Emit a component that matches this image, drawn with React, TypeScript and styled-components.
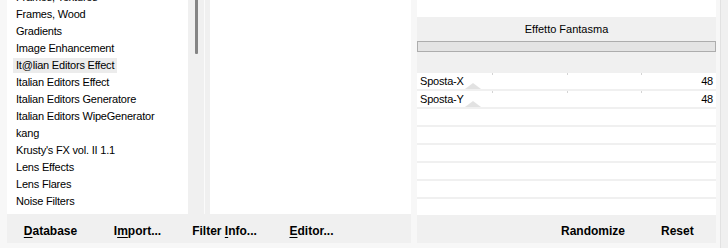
import React from 'react';
import styled, { createGlobalStyle } from 'styled-components';

const CATEGORIES = [
  'Frames, Textures',
  'Frames, Wood',
  'Gradients',
  'Image Enhancement',
  'It@lian Editors Effect',
  'Italian Editors Effect',
  'Italian Editors Generatore',
  'Italian Editors WipeGenerator',
  'kang',
  "Krusty's FX vol. II 1.1",
  'Lens Effects',
  'Lens Flares',
  'Noise Filters',
  'Paper Backgrounds',
];

const SELECTED = 'It@lian Editors Effect';

const PARAMS = [
  { name: 'Sposta-X', value: 48 },
  { name: 'Sposta-Y', value: 48 },
];

const EMPTY_ROWS = 6;

const GlobalStyle = createGlobalStyle`
  html, body {
    margin: 0;
    padding: 0;
    background: #f7f7f7;
  }
  body {
    font-family: "Liberation Sans", Arial, sans-serif;
    font-size: 11px;
    color: #000;
  }
`;

const Window = styled.div`
  display: flex;
  width: 728px;
  height: 248px;
  overflow: hidden;
  padding-left: 7px;
  box-sizing: border-box;
  background: #f7f7f7;
`;

const LeftSide = styled.div`
  display: flex;
  flex-direction: column;
  width: 404px;
`;

const TopArea = styled.div`
  display: flex;
  height: 214px;
  background: #f0f0f0;
`;

const ListBox = styled.div`
  width: 181px;
  background: #fff;
  overflow: hidden;
`;

const ListInner = styled.div`
  margin-top: -11px;
`;

const ListItem = styled.div`
  height: 17px;
  line-height: 17px;
  padding-left: 9px;
  letter-spacing: -0.2px;
  white-space: nowrap;
`;

const ItemLabel = styled.span<{ $selected?: boolean }>`
  display: inline-block;
  line-height: 15px;
  padding: 0 3px;
  margin-left: -3px;
  background: ${({ $selected }) => ($selected ? '#ececec' : 'transparent')};
`;

const ScrollTrack = styled.div`
  width: 16px;
  background: #f0f0f0;
  border-right: 1px solid #fbfbfb;
`;

const ScrollThumb = styled.div`
  width: 3px;
  height: 54px;
  margin-left: 7px;
  background: #858585;
  border-radius: 0 0 1px 1px;
`;

const PreviewPanel = styled.div`
  width: 201px;
  margin-left: 5px;
  background: #fff;
`;

const ButtonBar = styled.div<{ $height: number }>`
  display: flex;
  align-items: center;
  height: ${({ $height }) => $height}px;
  padding-top: 4px;
  box-sizing: border-box;
  background: #f0f0f0;
`;

const BarButton = styled.div`
  width: 87px;
  text-align: center;
  font-size: 12px;
  font-weight: bold;
  white-space: nowrap;
`;

const RightBar = styled(ButtonBar)`
  padding-left: 144px;
  gap: 36px;
`;

const PlainButton = styled.div`
  font-size: 12px;
  font-weight: bold;
  white-space: nowrap;
`;

const RightSide = styled.div`
  display: flex;
  flex-direction: column;
  width: 299px;
  margin-left: 6px;
`;

const TopWhite = styled.div`
  height: 17px;
  background: #fff;
`;

const Header = styled.div`
  height: 56px;
  background: #f0f0f0;
`;

const Title = styled.div`
  height: 24px;
  line-height: 24px;
  text-align: center;
`;

const TitleBar = styled.div`
  height: 11px;
  box-sizing: border-box;
  border: 1px solid #adadad;
  background: #e4e4e4;
`;

const Rows = styled.div`
  display: flex;
  flex-direction: column;
  gap: 2px;
  height: 142px;
  background: #f0f0f0;
`;

const ParamRow = styled.div`
  position: relative;
  display: flex;
  justify-content: space-between;
  height: 16px;
  line-height: 16px;
  padding: 0 3px;
  background: #fff;
  letter-spacing: -0.2px;
`;

const Tick = styled.span`
  position: absolute;
  top: 0;
  width: 1px;
  height: 2px;
  background: #d4d4d4;
`;

const Thumb = styled.span`
  position: absolute;
  bottom: 0;
  width: 0;
  height: 0;
  border-left: 8px solid transparent;
  border-right: 8px solid transparent;
  border-bottom: 6px solid #e2e2e2;
`;

const Label = styled.span`
  position: relative;
`;

const Gutter = styled.div`
  width: 4px;
`;

const EdgeLine = styled.div`
  width: 1px;
  background: #e2e2e2;
`;

const EdgeFill = styled.div`
  flex: 1;
  background: #f0f0f0;
`;

const Key = styled.u`
  text-decoration-thickness: 1px;
  text-underline-offset: 2px;
`;

const App: React.FC = () => {
  return (
    <>
      <GlobalStyle />
      <Window>
        <LeftSide>
          <TopArea>
            <ListBox>
              <ListInner>
                {CATEGORIES.map((c) => (
                  <ListItem key={c}>
                    <ItemLabel $selected={c === SELECTED}>{c}</ItemLabel>
                  </ListItem>
                ))}
              </ListInner>
            </ListBox>
            <ScrollTrack>
              <ScrollThumb />
            </ScrollTrack>
            <PreviewPanel />
          </TopArea>
          <ButtonBar $height={29}>
            <BarButton>
              <Key>D</Key>atabase
            </BarButton>
            <BarButton>
              I<Key>m</Key>port...
            </BarButton>
            <BarButton>
              Filter <Key>I</Key>nfo...
            </BarButton>
            <BarButton>
              <Key>E</Key>ditor...
            </BarButton>
          </ButtonBar>
        </LeftSide>

        <RightSide>
          <TopWhite />
          <Header>
            <Title>Effetto Fantasma</Title>
            <TitleBar />
          </Header>
          <Rows>
            {PARAMS.map((p) => (
              <ParamRow key={p.name}>
                {[0.25, 0.5, 0.75].map((t) => (
                  <Tick key={t} style={{ left: `${t * 100}%` }} />
                ))}
                <Thumb style={{ left: `${(p.value / 255) * 299 - 8}px` }} />
                <Label>{p.name}</Label>
                <Label>{p.value}</Label>
              </ParamRow>
            ))}
            {Array.from({ length: EMPTY_ROWS }).map((_, i) => (
              <ParamRow key={i} />
            ))}
          </Rows>
          <RightBar $height={28}>
            <PlainButton>Randomize</PlainButton>
            <PlainButton>Reset</PlainButton>
          </RightBar>
        </RightSide>
        <Gutter />
        <EdgeLine />
        <EdgeFill />
      </Window>
    </>
  );
};

export default App;
